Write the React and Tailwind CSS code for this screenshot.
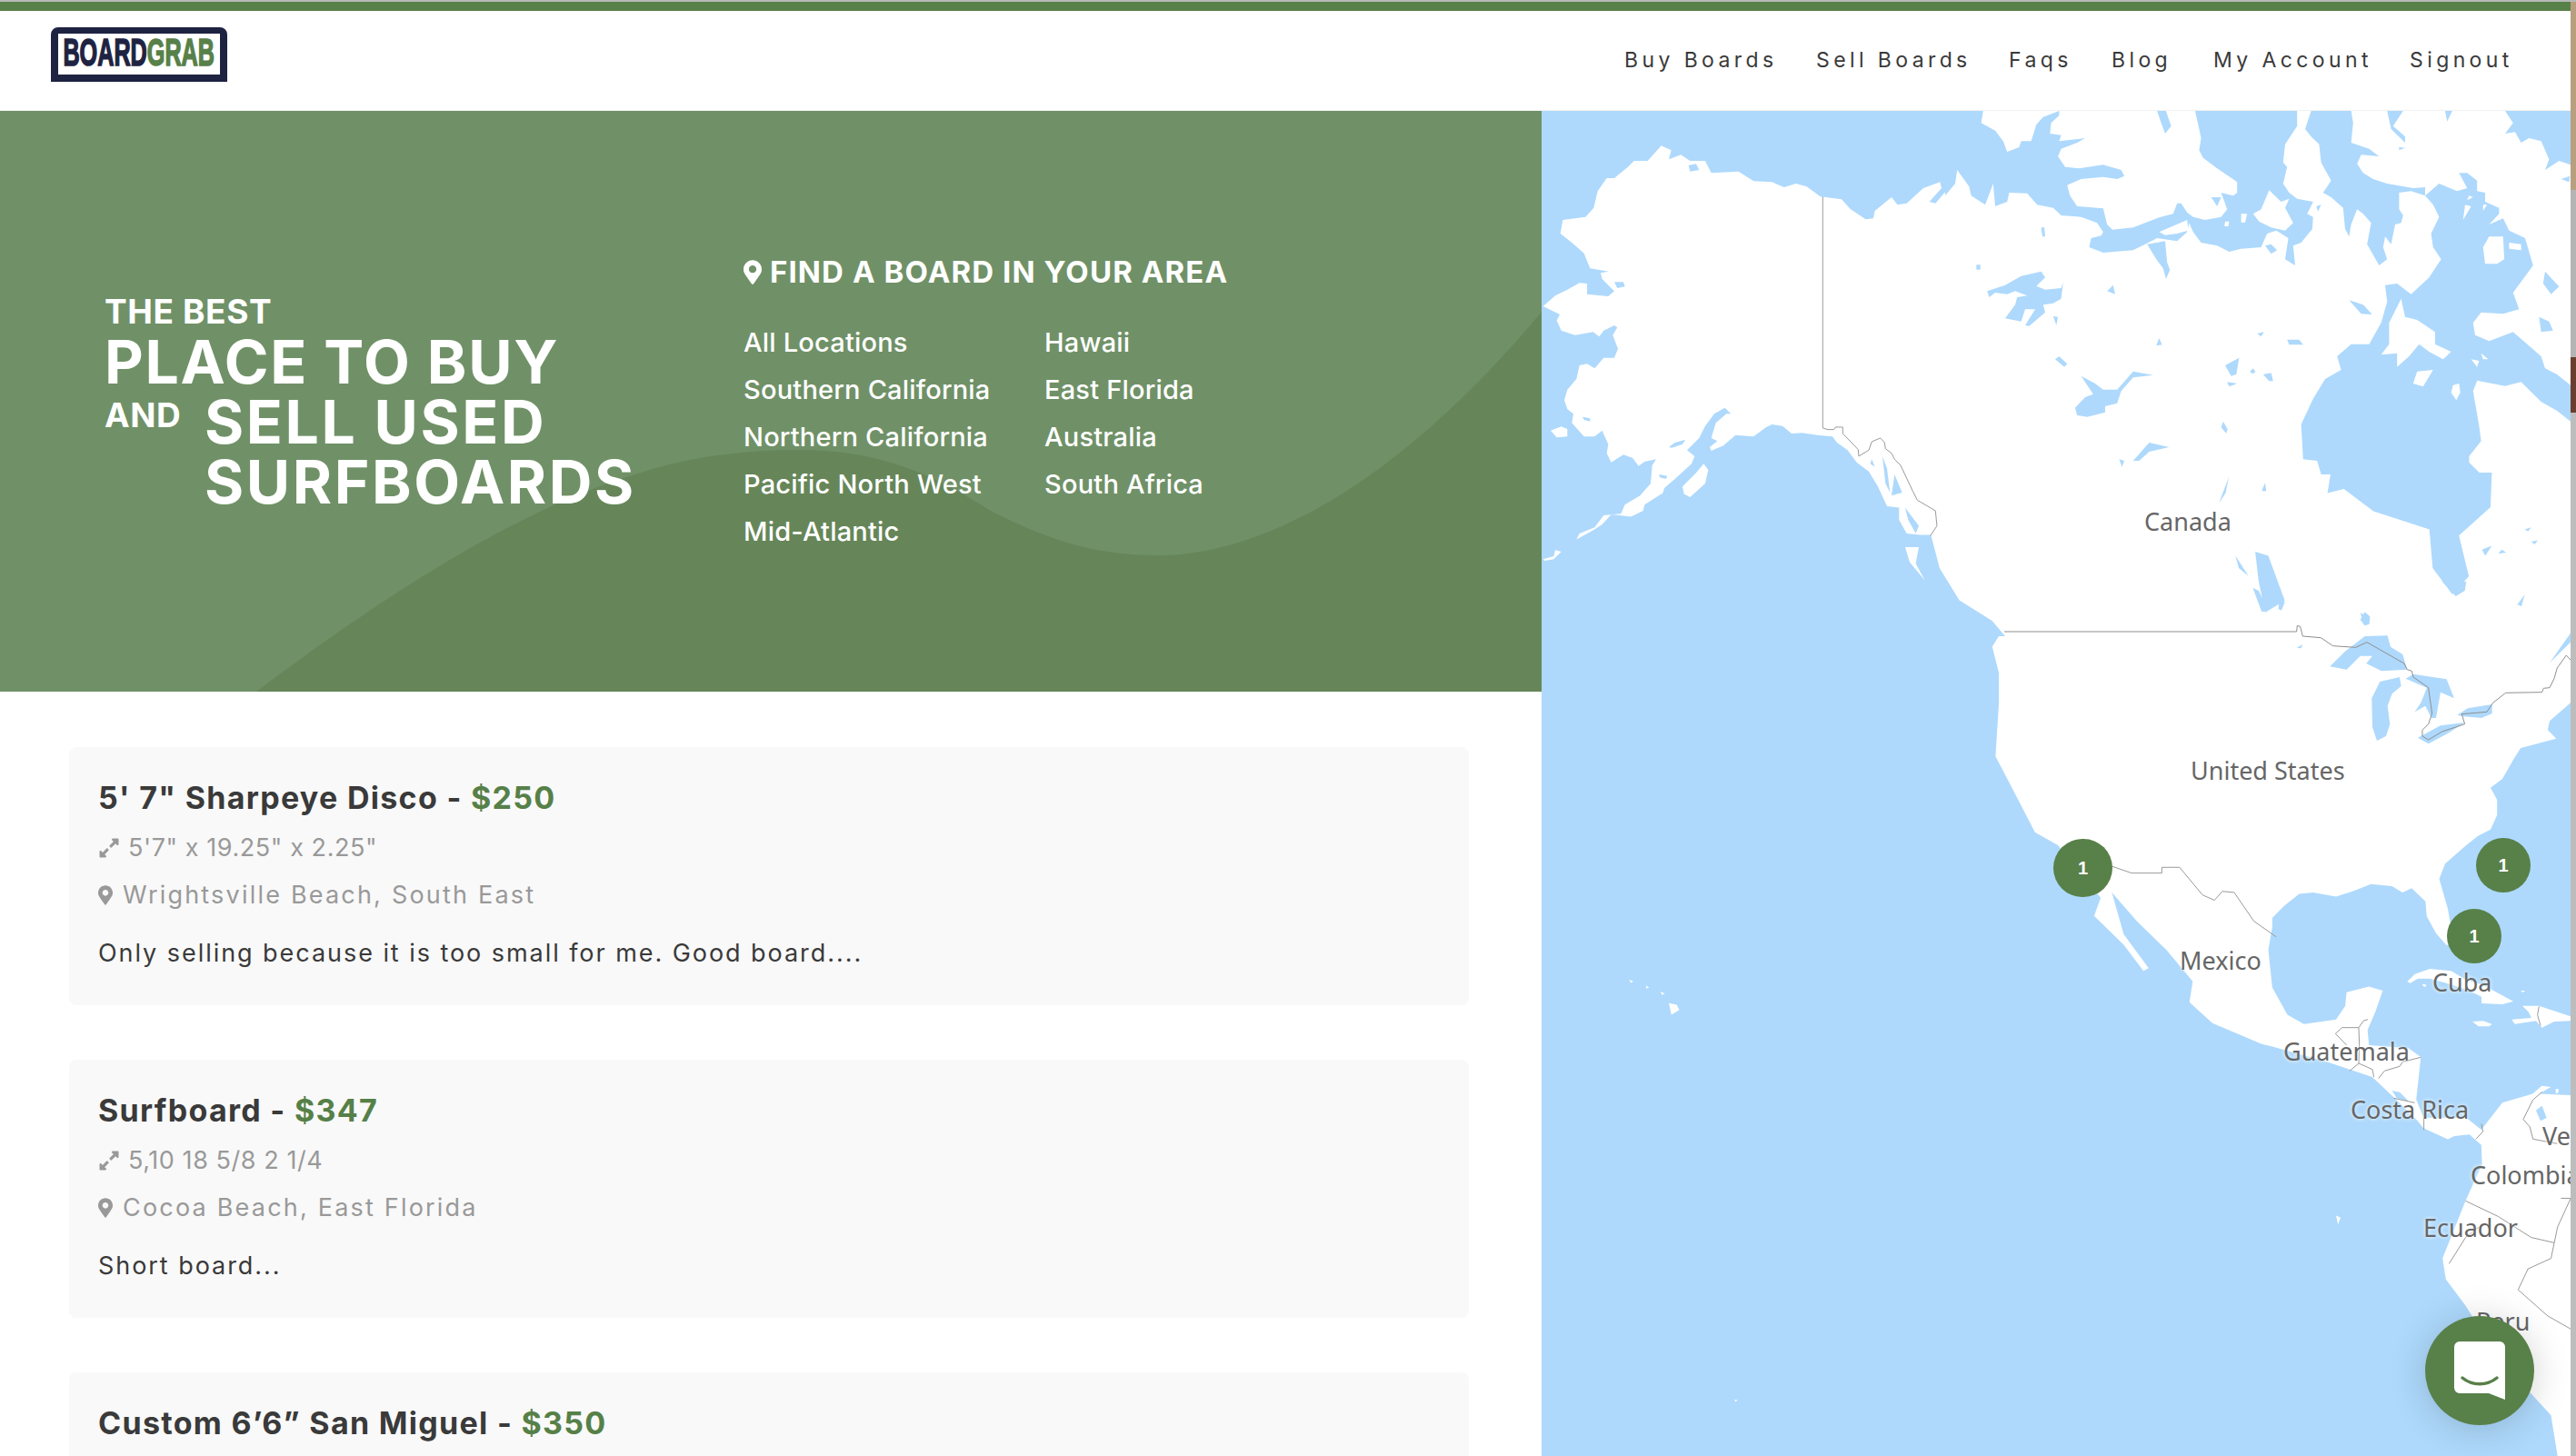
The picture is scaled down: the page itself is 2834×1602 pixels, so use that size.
import React from "react";
import { FaExpandAlt, FaMapMarkerAlt } from "react-icons/fa";

const navLinks = [
  { label: "Buy Boards", width: "w-[165px]" },
  { label: "Sell Boards", width: "w-[166px]" },
  { label: "Faqs", width: "w-[67px]" },
  { label: "Blog", width: "w-[66px]" },
  { label: "My Account", width: "w-[170px]" },
  { label: "Signout", width: "w-[113px]" },
];

const locationsLeft = ["All Locations", "Southern California", "Northern California", "Pacific North West", "Mid-Atlantic"];
const locationsRight = ["Hawaii", "East Florida", "Australia", "South Africa"];

const boards = [
  {
    title: "5' 7\" Sharpeye Disco",
    price: "$250",
    size: "5'7\" x 19.25\" x 2.25\"",
    place: "Wrightsville Beach, South East",
    text: "Only selling because it is too small for me. Good board....",
  },
  {
    title: "Surfboard",
    price: "$347",
    size: "5,10 18 5/8 2 1/4",
    place: "Cocoa Beach, East Florida",
    text: "Short board...",
  },
  { title: "Custom 6’6” San Miguel", price: "$350" },
];

// map outlines traced off the reference, each group below has its own scale
const alaskaLand =
  "5,645 45,610 85,590 125,568 150,570 150,605 220,612 240,595 220,575 200,555 195,535 222,530 160,520 140,470 100,435 62,405 70,360 145,350 172,320 185,265 215,222 240,222 285,185 305,165 350,165 395,115 428,130 420,160 460,145 490,165 540,165 560,205 650,200 700,232 760,235 800,252 840,240 875,250 920,283 990,292 1020,325 1070,358 1095,355 1100,330 1155,285 1175,310 1205,305 1260,255 1315,235 1320,255 1280,300 1300,305 1330,270 1360,255 1380,230 1368,195 1400,225 1420,285 1455,313 1490,240 1500,310 3396,310 3396,1734 1530,1734 1487,1683 1379,1616 1314,1510 1285,1400 1250,1400 1205,1395 1180,1350 1180,1310 1140,1305 1110,1240 1080,1190 1040,1160 1010,1120 975,1095 960,1075 910,1070 860,1063 825,1065 795,1040 760,1035 740,1045 700,1075 640,1070 600,1105 560,1122 555,1110 580,1090 560,1080 575,1030 610,1000 625,1000 605,980 570,1000 540,1040 520,1080 480,1120 505,1140 495,1165 440,1215 405,1245 400,1262 340,1300 335,1320 295,1340 230,1332 200,1365 170,1385 115,1415 125,1395 175,1375 205,1335 262,1330 275,1300 325,1270 360,1230 365,1170 378,1150 340,1158 320,1172 300,1145 270,1135 230,1160 215,1130 220,1100 200,1055 175,1075 140,1075 100,1030 105,1000 85,985 75,955 85,920 115,885 125,840 150,835 175,850 205,815 240,815 252,785 235,740 250,715 240,708 205,725 190,745 170,730 110,740 65,725 50,692 60,672";

const alaskaIslands = [
  "465,1240 510,1195 535,1165 550,1185 540,1230 490,1275 470,1265",
  "5,1480 40,1470 45,1450 65,1455 40,1480 10,1485",
  "30,1055 65,1042 85,1050 85,1075 50,1078",
  "1200,1440 1245,1440 1235,1495 1265,1550 1215,1490",
];

const alaskaWater = [
  "420,1110 440,1095 475,1085 465,1100 430,1112",
  "485,180 510,175 520,195 490,200",
  "240,565 270,565 275,580 250,585",
  "135,1010 160,1015 160,1025 140,1020",
  "388,1200 415,1205 410,1215 390,1210",
  "1125,1140 1140,1180 1150,1260 1135,1230",
  "1165,1200 1190,1260 1155,1270",
  "1090,1150 1100,1175 1085,1165",
  "1200,1310 1245,1370 1235,1395 1210,1350",
  "1435,510 1450,510 1448,525 1435,525",
  "1470,595 1500,592 1500,605 1480,618",
];

const alaskaBorder =
  "928,283 928,1047 945,1052 965,1052 970,1044 994,1044 994,1065 1045,1118 1047,1140 1080,1120 1090,1092 1118,1080 1132,1095 1135,1115 1155,1130 1165,1150 1185,1170 1225,1255 1240,1285 1300,1320 1305,1370 1283,1403";

const arcticWater = [
  "0,0 95,0 90,40 125,65 145,100 155,135 185,120 190,100 215,100 228,45 245,20 285,0 285,15 265,40 262,75 290,80 285,100 350,90 330,105 290,125 282,150 300,185 335,190 395,178 440,195 448,215 430,225 395,218 340,225 305,245 312,280 330,315 395,322 405,375 418,392 470,385 535,352 570,340 580,305 590,305 605,335 620,350 650,360 690,350 705,325 690,270 720,280 730,270 730,235 680,190 645,155 635,130 640,90 625,0 880,0 880,50 850,110 845,170 855,185 845,240 860,270 880,290 920,300 905,340 920,350 918,390 890,435 870,445 875,510 850,490 858,420 828,395 805,405 790,450 740,455 710,465 680,445 640,435 620,400 610,370 605,400 580,430 530,420 500,440 470,460 395,468 360,450 365,420 390,412 395,400 380,370 340,350 290,345 270,320 230,310 205,272 160,270 155,300 125,315 120,240 100,310 65,280 60,250 30,195 25,240 0,280",
  "915,0 1015,0 1020,40 1015,105 1060,125 1085,150 1040,145 1030,175 1045,205 1070,225 1105,240 1170,255 1200,252 1200,280 1165,265 1135,270 1135,325 1145,345 1140,370 1125,375 1115,440 1100,415 1095,450 1105,490 1085,510 1055,440 1065,370 1045,340 1030,325 1015,375 1010,415 1000,390 995,320 965,285 945,270 965,230 940,170 935,110 915,85 900,60",
  "1200,280 1235,240 1280,265 1305,255 1285,205 1305,205 1330,230 1330,265 1350,270 1350,300 1385,320 1385,340 1360,375 1395,355 1410,395 1450,420 1470,510 1420,600 1435,655 1395,670 1340,665 1320,700 1325,740 1360,760 1420,730 1490,810 1500,850 1530,870 1568,910 1568,1030 1530,990 1490,960 1440,895 1400,908 1330,890 1320,925 1335,1040 1340,1090 1310,1140 1310,1160 1340,1200 940,1200 930,1155 895,1150 890,1035 920,950 950,885 990,855 980,810 1015,770 1060,770 1090,700 1105,630 1100,575 1130,570 1165,605 1210,550 1240,490 1220,450 1215,405 1235,350 1220,310",
  "1400,0 1568,0 1568,180 1535,165 1500,195 1510,160 1490,100 1460,90 1440,105 1425,70 1400,75 1420,40",
  "1105,0 1145,0 1120,50 1150,85 1150,105 1115,60",
  "1250,0 1268,0 1255,35",
  "530,0 552,0 565,50 550,75 540,40",
  "1135,120 1150,122 1135,130",
  "1540,225 1562,215 1560,235",
  "505,440 550,430 555,500 562,525 552,555 545,520 528,490",
  "665,285 690,285 680,315",
  "800,445 815,440 830,460 815,472",
  "240,385 248,385 250,415 243,415",
  "78,508 88,508 88,524 78,524",
  "928,315 940,310 932,332",
  "105,595 150,575 190,545 240,530 250,550 228,578 250,590 290,585 295,565 290,620 270,635 245,640 250,665 210,710 200,708 225,655 200,655 190,695 150,685 175,640 180,615 205,610 175,595 155,605 125,600 110,615",
  "340,875 375,900 395,920 430,920 470,860 520,872 470,880 440,925 430,965 400,975 400,995 355,1010 330,1005 325,980 350,945 370,935",
  "470,1155 510,1095 560,1110 510,1125 485,1155",
  "435,1150 448,1155 442,1175",
  "275,820 285,810 305,835 298,845",
  "405,595 420,575 425,605",
  "270,678 282,680 278,708",
  "528,775 535,750 542,772",
  "780,735 797,730 790,745",
  "855,755 885,755 895,772 860,772",
  "700,840 735,815 728,870 715,875",
  "762,860 770,850 776,862 768,868",
  "795,870 815,865 820,892 810,892",
  "705,895 730,900 710,910",
  "690,1045 695,1025 706,1050 703,1065",
  "1010,625 1045,640 1068,672 1040,670",
  "1500,530 1535,580 1515,605 1495,570",
  "1485,680 1510,695 1520,725 1490,730",
];

const arcticIslands = [
  "770,340 790,325 810,262 840,300 860,290 850,320 870,370 850,395 815,385 785,365",
  "740,340 755,340 750,368 740,368",
  "700,365 710,365 708,382 698,380",
  "535,400 605,360 608,395 580,405 550,410",
  "1360,415 1395,415 1398,490 1380,505 1350,505 1345,450",
  "1410,435 1440,440 1440,460 1410,455",
  "1140,620 1150,680 1180,690 1225,730 1225,770 1265,795 1245,820 1210,795 1185,770 1160,810 1130,845 1130,800 1090,805 1110,770 1110,700",
  "1180,860 1220,855 1195,910 1170,900",
  "1270,905 1285,900 1288,930 1278,955 1265,930",
  "1315,820 1335,825 1330,845",
  "1340,800 1358,820 1345,820",
  "1300,310 1315,315 1295,360",
  "1345,310 1355,310 1345,330",
  "1310,280 1320,285 1305,295",
];

const northWater = [
  "1195,1165 1440,1165 1438,1250 1390,1320 1405,1420 1380,1465 1350,1400 1345,1305 1260,1260 1215,1205 1190,1215",
  "1080,1360 1100,1370 1125,1480 1095,1510 1085,1430",
  "1050,1370 1070,1420 1055,1400",
  "1025,1240 1040,1175 1035,1215",
  "1095,1190 1097,1210 1090,1210",
  "1240,1510 1255,1525 1245,1540",
  "1425,1355 1440,1345 1430,1370",
  "1455,1355 1462,1362 1450,1365",
  "1490,1305 1500,1300 1495,1310",
  "1500,1335 1510,1332 1505,1342",
  "1480,1490 1490,1465 1485,1495",
];

const southLand =
  "690,0 1560,0 1560,127 1528,162 1525,179 1538,196 1484,214 1475,231 1456,273 1438,290 1448,313 1448,342 1438,370 1419,382 1401,400 1369,435 1360,464 1373,521 1382,585 1371,591 1355,568 1341,536 1339,507 1318,482 1304,490 1288,478 1256,474 1230,487 1203,498 1168,490 1147,493 1124,516 1106,539 1106,556 1100,600 1106,672 1129,724 1154,742 1203,733 1217,707 1219,681 1253,670 1274,678 1263,718 1251,753 1253,782 1313,788 1332,805 1325,886 1336,921 1401,921 1424,944 1456,892 1502,875 1516,860 1530,862 1512,875 1560,878 1560,1568 1540,1568 1530,1490 1450,1380 1400,1280 1370,1230 1365,1190 1400,1080 1425,1010 1424,973 1406,953 1383,956 1373,962 1336,941 1327,927 1290,881 1258,843 1189,814 1106,785 1090,780 1015,740 980,700 985,660 945,600 900,545 862,490 880,570 918,635 910,640 880,590 835,535 845,500 780,400 745,375 710,290 685,230 690,130 690,70 680,20";

const pacificIslands = [
  "188,702 200,705 204,715 192,724",
  "128,657 134,660 130,663",
  "153,668 158,672 154,674",
  "175,680 182,683 178,686",
  "1203,1108 1210,1112 1206,1125",
  "288,1460 292,1460 290,1465",
];

const southBorders = [
  "862,440 892,453 938,453 938,442 965,442 1000,495 1018,505 1030,488 1048,490 1078,545 1112,575",
  "1400,1080 1450,1110 1500,1150 1535,1160 1530,1190 1495,1210 1480,1250 1525,1300 1560,1325",
  "1375,1200 1400,1150 1420,1130",
  "1545,1075 1560,1075 1540,1130 1535,1160",
];

const caribbeanIslands = [
  "445,480 470,455 520,438 590,445 640,475 690,490 730,510 795,545 760,555 690,552 690,530 650,510 590,490 520,470 480,470 455,485",
  "825,560 880,560 985,595 985,610 930,612 890,632 870,610 800,620 790,605 855,600 845,580",
  "660,612 695,610 725,620 715,628 680,628",
  "495,488 508,490 505,498 497,495",
  "935,835 945,835 943,848 935,848",
  "820,510 835,510 825,516",
];

const caribbeanWater = [
  "395,840 420,845 450,875 410,865",
  "870,905 890,890 905,930 885,940",
];

const caribbeanBorders = [
  "208,652 230,632 285,632 287,690",
  "208,652 245,690",
  "285,632 300,610 315,605",
  "287,690 285,750",
  "255,775 285,750 330,770 335,795",
  "350,800 370,775 420,760 430,745 490,730",
  "400,865 470,880",
  "500,930 500,970",
  "690,950 695,975 672,1000",
  "890,845 860,870 828,935 850,960 860,1000 940,1015",
  "880,562 875,590 885,625",
];

const lakes = [
  "490,280 540,230 605,180 680,178 690,215 730,240 745,290 660,295 610,270 630,245 590,245 545,290",
  "628,385 655,330 720,315 725,345 695,370 680,410 688,470 675,510 645,525 630,480",
  "740,320 765,305 830,315 875,322 900,385 855,365 840,450 825,450 805,410 770,430 790,400 810,350",
  "780,515 855,475 935,465 880,500 815,535",
  "910,440 945,418 1025,405 1025,435 990,450 930,445",
  "590,125 605,100 622,115 620,140 605,145",
  "380,218 400,207 395,220",
  "1215,268 1284,170 1284,200",
  "860,0 940,0 935,30 905,48 885,25",
  "235,20 255,30 285,95 265,100",
  "325,30 340,70 330,95 320,90",
  "1108,75 1135,42 1110,78",
];

const lakeBorder =
  "-585,165 380,165 382,145 392,148 400,180 460,185 500,212 575,217 612,200 735,270 745,290 760,295 765,315 815,350 827,435 815,470 795,490 795,510 815,522 860,495 935,470 925,437 1008,430 1028,400 1070,367 1190,365 1195,352 1215,350 1230,320 1240,285 1270,243 1284,258";

const WATER = "#aed9fc";
const BORDER = "#9a9a9a";

const mapLabels = [
  { text: "Canada", x: "left-[663px]", y: "top-[434px]" },
  { text: "United States", x: "left-[714px]", y: "top-[708px]" },
  { text: "Mexico", x: "left-[702px]", y: "top-[917px]" },
  { text: "Cuba", x: "left-[980px]", y: "top-[941px]" },
  { text: "Guatemala", x: "left-[816px]", y: "top-[1017px]" },
  { text: "Costa Rica", x: "left-[890px]", y: "top-[1081px]" },
  { text: "Ve", x: "left-[1101px]", y: "top-[1110px]" },
  { text: "Colombia", x: "left-[1022px]", y: "top-[1153px]" },
  { text: "Ecuador", x: "left-[970px]", y: "top-[1211px]" },
  { text: "Peru", x: "left-[1028px]", y: "top-[1314px]" },
];

const markers = [
  { x: "left-[595px]", y: "top-[833px]", size: "w-[65px] h-[64px] -ml-[32px] -mt-[32px]" },
  { x: "left-[1058px]", y: "top-[830px]", size: "w-[60px] h-[60px] -ml-[30px] -mt-[30px]" },
  { x: "left-[1026px]", y: "top-[908px]", size: "w-[60px] h-[60px] -ml-[30px] -mt-[30px]" },
];

const Shapes = ({ list, fill }) =>
  list.map((points) => <polygon key={points} points={points} fill={fill} />);

const Lines = ({ list, color = BORDER }) =>
  list.map((points) => (
    <polyline key={points} points={points} fill="none" stroke={color} strokeWidth="1" vectorEffect="non-scaling-stroke" />
  ));

const Logo = () => (
  <div className="w-[194px] h-[60px] bg-white border-x-[8px] border-t-[7px] border-b-[8px] border-[#1f2342] rounded-t-[8px] overflow-hidden">
    <div className="pt-[2px] pl-[9px] w-[300px] origin-left scale-x-[0.6] font-['Liberation_Sans',sans-serif] font-bold text-[42px] leading-[38px] [-webkit-text-stroke:1.6px_currentColor] text-[#1f2342]">
      BOARD<span className="text-[#588049]">GRAB</span>
    </div>
  </div>
);

const Header = () => (
  <header className="h-[122px] bg-white border-t-[2px] border-[#b9b9b9] flex flex-col">
    <div className="h-[10px] bg-[#588049]" />
    <div className="flex-1 flex items-start justify-between pl-[56px] pr-[64px] border-b border-[#f2f2f2]">
      <div className="pt-[18px]">
        <Logo />
      </div>
      <nav className="flex gap-[46px] pt-[38px] font-['Inter',sans-serif] text-[23px] leading-[32px] font-normal tracking-[4.4px] text-[#3a3a3a]">
        {navLinks.map((link) => (
          <a key={link.label} className={`${link.width} whitespace-nowrap`}>
            {link.label}
          </a>
        ))}
      </nav>
    </div>
  </header>
);

const Hero = () => (
  <section className="relative h-[639px] bg-[#709167] text-white font-['Inter',sans-serif] overflow-hidden">
    <svg className="absolute inset-0 w-full h-full" viewBox="0 0 1696 639" preserveAspectRatio="none">
      <path
        d="M282 639 C400 550 560 440 705 398 C760 380 820 373 880 373 C960 373 1020 395 1090 440 C1150 470 1200 489 1274 489 C1380 489 1530 420 1696 221 L1696 639 Z"
        fill="#668659"
      />
    </svg>
    <div className="relative flex pl-[115px]">
      <div className="w-[703px] pt-[201px] font-bold">
        <div className="text-[37px] leading-[40px] tracking-[0.6px]">THE BEST</div>
        <div className="text-[66px] leading-[66px] mt-[2px] tracking-[1.7px]">PLACE TO BUY</div>
        <div className="flex">
          <div className="w-[110px] text-[37px] leading-[52px] tracking-[0.6px]">AND</div>
          <div className="text-[66px] leading-[66px] tracking-[2.6px]">
            <div>SELL USED</div>
            <div>SURFBOARDS</div>
          </div>
        </div>
      </div>
      <div className="pt-[157px]">
        <div className="flex items-center gap-[9px] text-[33px] leading-[40px] font-bold tracking-[1.1px]">
          <FaMapMarkerAlt className="w-[20px] h-[27px]" />
          <span>FIND A BOARD IN YOUR AREA</span>
        </div>
        <div className="flex mt-[32px] text-[29px] leading-[52px] font-medium tracking-[0.2px]">
          <div className="w-[331px]">
            {locationsLeft.map((name) => (
              <div key={name}>{name}</div>
            ))}
          </div>
          <div>
            {locationsRight.map((name) => (
              <div key={name}>{name}</div>
            ))}
          </div>
        </div>
      </div>
    </div>
  </section>
);

const BoardCard = ({ board }) => (
  <article className="h-[284px] shrink-0 rounded-[8px] bg-[#f9f9f9] px-[32px] pt-[34px] font-['Inter',sans-serif]">
    <h3 className="text-[34px] leading-[44px] font-bold tracking-[1.3px] text-[#3a3a3a] whitespace-nowrap">
      {board.title} - <span className="text-[#568048]">{board.price}</span>
    </h3>
    {board.size && (
      <>
        <div className="flex items-center gap-[9px] h-[36px] mt-[15px] text-[27px] text-[#999999] tracking-[0.57px]">
          <FaExpandAlt className="w-[24px] h-[24px]" />
          <span>{board.size}</span>
        </div>
        <div className="flex items-center gap-[11px] h-[36px] mt-[16px] text-[27px] text-[#999999] tracking-[2.2px]">
          <FaMapMarkerAlt className="w-[16px] h-[22px]" />
          <span>{board.place}</span>
        </div>
        <p className="mt-[28px] text-[27px] leading-[36px] text-[#3a3a3a] tracking-[1.95px]">{board.text}</p>
      </>
    )}
  </article>
);

const Map = () => (
  <div className="relative w-[1132px] h-[1480px] bg-[#aed9fc] overflow-hidden">
    <svg className="absolute inset-0 w-full h-full" viewBox="0 0 1132 1480">
      <g transform="scale(.3333)">
        <polygon points={alaskaLand} fill="#ffffff" />
        <Shapes list={alaskaIslands} fill="#ffffff" />
        <Shapes list={alaskaWater} fill={WATER} />
        <Lines list={[alaskaBorder]} />
      </g>
      <g transform="translate(444 0) scale(.44 .3333)">
        <rect x="0" y="0" width="1568" height="1200" fill="#ffffff" />
        <Shapes list={arcticWater} fill={WATER} />
        <Shapes list={arcticIslands} fill="#ffffff" />
      </g>
      <g transform="translate(4 -122) scale(.7232 .4464)">
        <Shapes list={northWater} fill={WATER} />
      </g>
      <g transform="translate(4 578) scale(.7232 .5753)">
        <polygon points={southLand} fill="#ffffff" />
        <Shapes list={pacificIslands} fill="#ffffff" />
        <Lines list={southBorders} />
      </g>
      <g transform="translate(804 798) scale(.3333)">
        <Shapes list={caribbeanIslands} fill="#ffffff" />
        <Shapes list={caribbeanWater} fill={WATER} />
        <Lines list={caribbeanBorders} />
      </g>
      <g transform="translate(704 518) scale(.3333)">
        <Shapes list={lakes} fill={WATER} />
        <Lines list={[lakeBorder]} color="#8f8f8f" />
      </g>
    </svg>
    {mapLabels.map((label) => (
      <span
        key={label.text}
        className={`absolute ${label.x} ${label.y} font-['Noto_Sans',sans-serif] text-[27px] leading-[36px] text-[#666666] whitespace-nowrap [text-shadow:0_0_4px_#ffffff]`}
      >
        {label.text}
      </span>
    ))}
    {markers.map((marker) => (
      <div
        key={marker.x}
        className={`absolute ${marker.x} ${marker.y} ${marker.size} rounded-full bg-[#588049] flex items-center justify-center font-['Liberation_Sans',sans-serif] font-bold text-[20px] text-white`}
      >
        1
      </div>
    ))}
    <button className="absolute left-[972px] top-[1326px] w-[120px] h-[120px] rounded-full bg-[#588049] shadow-[0_4px_40px_rgba(0,0,0,0.18)] flex items-center justify-center">
      <svg width="56" height="64" viewBox="0 0 56 64">
        <path d="M6 0 H50 A6 6 0 0 1 56 6 V64 L38 57 H6 A6 6 0 0 1 0 51 V6 A6 6 0 0 1 6 0 Z" fill="#ffffff" />
        <path d="M9 40 C20 49 36 49 47 40" fill="none" stroke="#588049" strokeWidth="3.5" strokeLinecap="round" />
      </svg>
    </button>
  </div>
);

const EdgeStrip = () => (
  <div className="w-[6px] h-[1602px] flex flex-col bg-[#b4b4b4]">
    <div className="h-[2px] bg-[#b9b9b9]" />
    <div className="h-[207px] bg-[#b89f7f]" />
    <div className="h-[184px]" />
    <div className="h-[61px] bg-[#6b3f30]" />
    <div className="flex-1 bg-[#bdbdbd]" />
  </div>
);

const App = () => {
  return (
    <div className="w-[2834px] h-[1602px] flex overflow-hidden bg-white">
      <div className="w-[2828px] flex flex-col">
        <Header />
        <div className="flex">
          <main className="w-[1696px] h-[1480px] overflow-hidden">
            <Hero />
            <div className="flex flex-col gap-[60px] pt-[61px] pl-[76px] pr-[80px]">
              {boards.map((board) => (
                <BoardCard key={board.title} board={board} />
              ))}
            </div>
          </main>
          <Map />
        </div>
      </div>
      <EdgeStrip />
    </div>
  );
};

export default App;
